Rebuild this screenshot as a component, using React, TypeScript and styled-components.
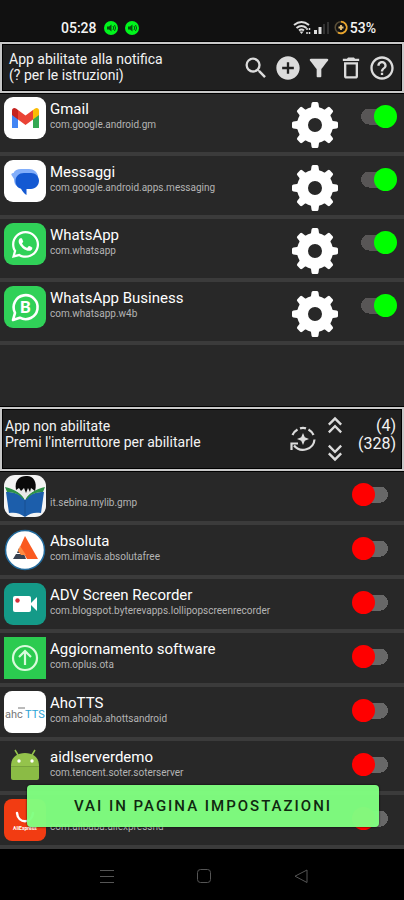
import React from "react";
import styled, { createGlobalStyle } from "styled-components";
import {
  MdSearch,
  MdAddCircle,
  MdFilterAlt,
  MdDeleteOutline,
  MdHelpOutline,
  MdKeyboardDoubleArrowUp,
  MdKeyboardDoubleArrowDown,
} from "react-icons/md";
import { FaWhatsapp } from "react-icons/fa";

const GlobalStyle = createGlobalStyle`
  *, *::before, *::after { box-sizing: border-box; }
  body { margin: 0; background: #000; font-family: Roboto, "Liberation Sans", sans-serif; }
  h2, h3, p, ul { margin: 0; padding: 0; }
  button { font-family: inherit; }
`;

const Screen = styled.div`
  display: flex;
  flex-direction: column;
  min-height: 100vh;
  background: #282828;
  color: #f4f4f4;
`;

const StatusBar = styled.header`
  display: flex;
  justify-content: space-between;
  height: 42px;
  padding: 20px 28px 6px 61px;
  background: #111;
  font-size: 14px;
  font-weight: 500;
  line-height: 16px;
`;

const StatusGroup = styled.div<{ $gap: number }>`
  display: flex;
  align-items: center;
  gap: ${(p) => p.$gap}px;
  height: 16px;
`;

const Panel = styled.section<{ $left: number; $height: number }>`
  display: flex;
  align-items: center;
  justify-content: space-between;
  min-height: ${(p) => p.$height}px;
  padding: 0 6px 0 ${(p) => p.$left}px;
  background: #202020;
  border: 2px solid #c8c8c8;
  box-shadow: inset 0 0 0 1px #000, 0 1px 0 #000, 0 -1px 0 #000;
  position: relative;
`;

const PanelTitle = styled.h2<{ $raise: number }>`
  margin-bottom: ${(p) => p.$raise}px;
  font-size: 14px;
  font-weight: 400;
  line-height: 16px;
`;

const Toolbar = styled.div`
  display: flex;
  justify-content: space-between;
  flex: 0 0 154px;
`;

const ToolButton = styled.button<{ $size: number }>`
  display: flex;
  align-items: center;
  justify-content: center;
  width: ${(p) => p.$size}px;
  height: ${(p) => p.$size}px;
  padding: 0;
  border: 0;
  background: none;
  color: #dcdcdc;
`;

const PanelTools = styled.div`
  display: flex;
  align-items: center;
  gap: 4px;
`;

const Arrows = styled.div`
  display: flex;
  flex-direction: column;
`;

const Counts = styled.div`
  width: 43px;
  margin-bottom: 8px;
  text-align: right;
  font-size: 16px;
  line-height: 18px;
`;

const EnabledList = styled.ul`
  flex: 1;
  min-height: 313px;
  list-style: none;
`;

const DisabledArea = styled.div`
  position: relative;
`;

const DisabledList = styled.ul`
  list-style: none;
`;

const AppRow = styled.li<{ $height: number }>`
  display: flex;
  align-items: flex-start;
  height: ${(p) => p.$height}px;
  padding: 4px 7px 0 4px;
  border-bottom: 4px solid #3b3b3b;
`;

const AppIcon = styled.svg`
  flex: 0 0 42px;
  width: 42px;
  height: 42px;
`;

const AppText = styled.div`
  flex: 1;
  min-width: 0;
  padding: 3px 0 0 4px;
  white-space: nowrap;
`;

const AppName = styled.h3`
  min-height: 18px;
  font-size: 15px;
  font-weight: 400;
  line-height: 18px;
  color: #fff;
`;

const AppPackage = styled.p`
  font-size: 10px;
  line-height: 14px;
  color: #b4b4b4;
`;

const GearButton = styled.button`
  width: 46px;
  height: 46px;
  margin: 5px 14px 0 0;
  padding: 0;
  border: 0;
  background: none;
`;

const Switch = styled.input`
  appearance: none;
  display: flex;
  align-items: center;
  flex: 0 0 45px;
  height: 23px;
  margin: 8px 0 0;
  background: linear-gradient(#686868, #686868) center / 12px 16px no-repeat,
    radial-gradient(circle at 17px 50%, #686868 8px, transparent 8px),
    radial-gradient(circle at 28px 50%, #686868 8px, transparent 8px);

  &::before {
    content: "";
    width: 23px;
    height: 23px;
    border-radius: 50%;
    background: #f00;
  }

  &:checked {
    justify-content: flex-end;
    background-image: linear-gradient(#585656, #585656),
      radial-gradient(circle at 17px 50%, #585656 8px, transparent 8px),
      radial-gradient(circle at 28px 50%, #585656 8px, transparent 8px);
  }

  &:checked::before {
    background: #0f0;
  }
`;

const SettingsButton = styled.button`
  position: absolute;
  left: 27px;
  right: 25px;
  bottom: 22px;
  height: 42px;
  padding: 0;
  border: 0;
  border-radius: 4px;
  background: rgba(128, 255, 128, 0.97);
  box-shadow: 0 0 2px #000;
  color: #102810;
  font-size: 15px;
  font-weight: 500;
  letter-spacing: 2px;
`;

const NavBar = styled.nav`
  display: flex;
  align-items: center;
  justify-content: space-around;
  height: 51px;
  padding: 3px 54px 0 58px;
  background: #000;
`;

const Tile = ({ fill, r = 9 }: { fill: string; r?: number }) => (
  <rect width="42" height="42" rx={r} fill={fill} />
);

const icons: Record<string, React.ReactNode> = {
  gmail: (
    <>
      <Tile fill="#fff" />
      <path d="M8 15v16h6V20z" fill="#4285f4" />
      <path d="M35 15v16h-6V20z" fill="#34a853" />
      <path d="M29 13l2-1.500c2-1.500 4 0 4 2V18l-6 4.500z" fill="#fbbc04" />
      <path d="M14 13l-2-1.500c-2-1.500-4 0-4 2V18l6 4.500z" fill="#c5221f" />
      <path d="M14 13l7.500 5.500L29 13v9.500L21.500 28 14 22.500z" fill="#ea4335" />
    </>
  ),
  messages: (
    <>
      <Tile fill="#fff" />
      <path d="M17 9h8c5 0 8 3 9 7l-6 11H17c-5 0-7-3-7-8l-2.500-4C7 14 7.500 13 9.500 13c1-2.500 4-4 7.500-4z" fill="#82aefa" />
      <path d="M20 13h7c4.500 0 8 3.300 8 7.700S31.500 29 27 29h-4.500v6c-2-1-4-3.500-5.500-6.200-3.500-1-5.500-4-5.500-7.800 0-4.600 3.500-8 8.500-8z" fill="#1459d2" />
    </>
  ),
  whatsapp: (
    <>
      <Tile fill="#30d158" />
      <FaWhatsapp x={6} y={6} size={31} color="#fff" />
    </>
  ),
  business: (
    <>
      <Tile fill="#30d158" />
      <path d="M9 34l2-7.200a12 12 0 1 1 4.800 4.900z" fill="none" stroke="#fff" strokeWidth="2.600" strokeLinejoin="round" />
      <text x="21.500" y="27" textAnchor="middle" fontSize="17" fontWeight="700" fill="#fff">B</text>
    </>
  ),
  library: (
    <>
      <Tile fill="#f4f4f4" r={11} />
      <path d="M2 17c7 0 14 1 19 8 5-7 12-8 19-8l-3 21c-6-1-11 0-16 4-5-4-10-5-16-4z" fill="#1c5eab" />
      <path d="M1 12c8 2 16 5 20 13 4-8 12-11 20-13l-2 5c-7 0-12 2-16 7h-4c-4-5-9-7-16-7z" fill="#2d9148" />
      <path d="M12 12h18v4c-4 2-7 4-9 9-2-5-5-7-9-9z" fill="#e8e8e8" />
      <path d="M12 15C10 5 16 1 22 1c6-1 12 5 9 15l-4-3-1 4-2-4-2 5-2-5-3 3-2-3z" fill="#090909" />
      <path d="M21 25v16" stroke="#174f91" />
    </>
  ),
  absoluta: (
    <>
      <circle cx="21" cy="21" r="19.500" fill="#fff" stroke="#226a9c" strokeWidth="1.500" />
      <path d="M21 7l13 23H23l-7-12z" fill="#fa5a20" />
      <path d="M15 19l4 5h-6zM12 25h8l2 5H9z" fill="#3a4352" />
      <path d="M16 17l6 9h-5l-3-4z" fill="#ff8a42" />
    </>
  ),
  recorder: (
    <>
      <Tile fill="#149a88" />
      <rect x="9" y="13" width="18" height="16" rx="2" fill="#fff" />
      <path d="M27 20l6-6v14l-6-6z" fill="#fff" />
      <circle cx="13.500" cy="17.500" r="2.200" fill="#d52e39" />
    </>
  ),
  update: (
    <>
      <Tile fill="#2bcb50" r={0} />
      <circle cx="21" cy="21" r="12" fill="none" stroke="#d9fbdc" strokeWidth="2.200" />
      <path d="M21 28V14M15 20l6-6 6 6" fill="none" stroke="#d9fbdc" strokeWidth="2.200" />
    </>
  ),
  aho: (
    <>
      <Tile fill="#fff" r={8} />
      <text x="1" y="27" fontSize="11" fill="#777">ahc</text>
      <text x="21" y="27" fontSize="11" fill="#2da4d6">TTS</text>
      <path d="M14 17h7" stroke="#777" />
    </>
  ),
  android: (
    <>
      <path d="M7 21C7 12 13 8 21 8s14 4 14 13z" fill="#94c34b" />
      <path d="M7 21h28v12a2 2 0 0 1-2 2H9a2 2 0 0 1-2-2z" fill="#8bbb45" />
      <path d="M7 21.500h28" stroke="#78a33c" />
      <path d="M14 10l-3-5M28 10l3-5" stroke="#94c34b" strokeWidth="1.500" />
      <circle cx="15" cy="16" r="1.700" fill="#fff" />
      <circle cx="28" cy="16" r="1.700" fill="#fff" />
    </>
  ),
  express: (
    <>
      <Tile fill="#f23c12" r={8} />
      <path d="M13 14c1 11 15 11 16 0" fill="none" stroke="#fff" strokeWidth="2.500" strokeLinecap="round" />
      <text x="21" y="31" textAnchor="middle" fontSize="5" fontWeight="700" fill="#fff">AliExpress</text>
    </>
  ),
};

const Gear = () => (
  <svg width="46" height="46" viewBox="0 0 46 46" aria-hidden="true">
    <g fill="#fff">
      {[0, 45, 90, 135, 180, 225, 270, 315].map((a) => (
        <path key={a} d="M16 9q2.500-1 3-4l.5-3.500Q19.700 0 21 0h4q1.300 0 1.500 1.500L27 5q.5 3 3 4z" transform={`rotate(${a} 23 23)`} />
      ))}
    </g>
    <circle cx="23" cy="23" r="12.500" fill="none" stroke="#fff" strokeWidth="11" />
  </svg>
);

const Speaker = () => (
  <svg width="14" height="14" viewBox="0 0 14 14" aria-hidden="true">
    <circle cx="7" cy="7" r="7" fill="#00f51c" />
    <path d="M3 5.500h2l2.500-2v7L5 8.500H3z" fill="#06520d" />
    <path d="M9 5q1.500 2 0 4M10.500 4q2.200 3 0 6" fill="none" stroke="#06520d" />
  </svg>
);

const Signals = () => (
  <svg width="56" height="16" viewBox="0 0 56 16" aria-hidden="true">
    <g fill="none" stroke="#ddd" strokeWidth="2">
      <path d="M1 5q7.500-6 15 0M3.500 8q5-4 10 0M6 10.500q2.500-2 5 0" />
    </g>
    <path d="M6.500 11.500h4l-2 2.500z" fill="#ddd" />
    <path d="M14 8v2M14 12v2M16.500 8v2M16.500 12v2" stroke="#ddd" strokeWidth="1.500" />
    <path d="M21 10h3v4h-3zM25.500 7h3v7h-3z" fill="#ddd" />
    <path d="M30 4h2v10h-2zM34 2h2v12h-2z" fill="#333" />
    <circle cx="48" cy="7.500" r="5.800" fill="none" stroke="#5a4e37" strokeWidth="1.500" />
    <path d="M48 1.700a5.800 5.800 0 1 1-3 10.800" fill="none" stroke="#eaa52b" strokeWidth="1.800" />
    <path d="M48 5v5M45.500 7.500h5" stroke="#e8c47c" strokeWidth="1.800" />
  </svg>
);

const RefreshStar = () => (
  <svg width="28" height="28" viewBox="0 0 28 28" aria-hidden="true">
    <g fill="none" stroke="#dcdcdc" strokeWidth="2.200">
      <path d="M11 3.400q3-1 6 0M19.500 4.500q3.500 2 5 5.500M8.500 4.500Q5 6.500 3.500 10M25.500 14.500a11.500 11 0 0 1-20.500 6" />
      <path d="M2.500 25v-6.500H9" />
    </g>
    <path d="M14 8l1.800 4.200L20 14l-4.200 1.800L14 20l-1.800-4.200L8 14l4.200-1.800z" fill="#dcdcdc" />
  </svg>
);

type AppInfo = { icon: string; name: string; pkg: string };

const enabledApps: AppInfo[] = [
  { icon: "gmail", name: "Gmail", pkg: "com.google.android.gm" },
  { icon: "messages", name: "Messaggi", pkg: "com.google.android.apps.messaging" },
  { icon: "whatsapp", name: "WhatsApp", pkg: "com.whatsapp" },
  { icon: "business", name: "WhatsApp Business", pkg: "com.whatsapp.w4b" },
];

const disabledApps: AppInfo[] = [
  { icon: "library", name: "", pkg: "it.sebina.mylib.gmp" },
  { icon: "absoluta", name: "Absoluta", pkg: "com.imavis.absolutafree" },
  { icon: "recorder", name: "ADV Screen Recorder", pkg: "com.blogspot.byterevapps.lollipopscreenrecorder" },
  { icon: "update", name: "Aggiornamento software", pkg: "com.oplus.ota" },
  { icon: "aho", name: "AhoTTS", pkg: "com.aholab.ahottsandroid" },
  { icon: "android", name: "aidlserverdemo", pkg: "com.tencent.soter.soterserver" },
  { icon: "express", name: "", pkg: "com.alibaba.aliexpresshd" },
];

const AppItem = ({ app, enabled }: { app: AppInfo; enabled: boolean }) => (
  <AppRow $height={enabled ? 63 : 54}>
    <AppIcon viewBox="0 0 42 42" aria-hidden="true">{icons[app.icon]}</AppIcon>
    <AppText>
      <AppName>{app.name}</AppName>
      <AppPackage>{app.pkg}</AppPackage>
    </AppText>
    {enabled && (
      <GearButton aria-label={`Impostazioni ${app.name}`}>
        <Gear />
      </GearButton>
    )}
    <Switch type="checkbox" role="switch" defaultChecked={enabled} aria-label={app.name || app.pkg} />
  </AppRow>
);

export default function App() {
  return (
    <Screen>
      <GlobalStyle />
      <StatusBar>
        <StatusGroup $gap={7}>
          <span>05:28</span>
          <Speaker />
          <Speaker />
        </StatusGroup>
        <StatusGroup $gap={1}>
          <Signals />
          <span>53%</span>
        </StatusGroup>
      </StatusBar>

      <Panel $left={7} $height={51}>
        <PanelTitle $raise={2}>
          App abilitate alla notifica
          <br />
          (? per le istruzioni)
        </PanelTitle>
        <Toolbar>
          <ToolButton $size={28} aria-label="Cerca"><MdSearch size={28} /></ToolButton>
          <ToolButton $size={28} aria-label="Aggiungi"><MdAddCircle size={28} /></ToolButton>
          <ToolButton $size={28} aria-label="Filtra"><MdFilterAlt size={28} /></ToolButton>
          <ToolButton $size={28} aria-label="Elimina"><MdDeleteOutline size={28} /></ToolButton>
          <ToolButton $size={28} aria-label="Aiuto"><MdHelpOutline size={28} /></ToolButton>
        </Toolbar>
      </Panel>

      <EnabledList>
        {enabledApps.map((app) => (
          <AppItem key={app.pkg} app={app} enabled />
        ))}
      </EnabledList>

      <Panel $left={3} $height={64}>
        <PanelTitle $raise={10}>
          App non abilitate
          <br />
          Premi l'interruttore per abilitarle
        </PanelTitle>
        <PanelTools>
          <ToolButton $size={28} aria-label="Aggiorna"><RefreshStar /></ToolButton>
          <Arrows>
            <ToolButton $size={28} aria-label="Su"><MdKeyboardDoubleArrowUp size={28} /></ToolButton>
            <ToolButton $size={28} aria-label="Giù"><MdKeyboardDoubleArrowDown size={28} /></ToolButton>
          </Arrows>
          <Counts>
            (4)
            <br />
            (328)
          </Counts>
        </PanelTools>
      </Panel>

      <DisabledArea>
        <DisabledList>
          {disabledApps.map((app) => (
            <AppItem key={app.pkg} app={app} enabled={false} />
          ))}
        </DisabledList>
        <SettingsButton>VAI IN PAGINA IMPOSTAZIONI</SettingsButton>
      </DisabledArea>

      <NavBar>
        <ToolButton $size={28} aria-label="Recenti">
          <svg width="16" height="16" fill="none" stroke="#555"><path d="M1 2.500h14M1 8.500h14M1 14.500h14" /></svg>
        </ToolButton>
        <ToolButton $size={28} aria-label="Home">
          <svg width="16" height="16" fill="none" stroke="#555"><rect x="1.500" y="1.500" width="13" height="13" rx="3" /></svg>
        </ToolButton>
        <ToolButton $size={28} aria-label="Indietro">
          <svg width="16" height="16" fill="none" stroke="#555" strokeLinejoin="round"><path d="M14 2v12.500L2 8.200z" /></svg>
        </ToolButton>
      </NavBar>
    </Screen>
  );
}
